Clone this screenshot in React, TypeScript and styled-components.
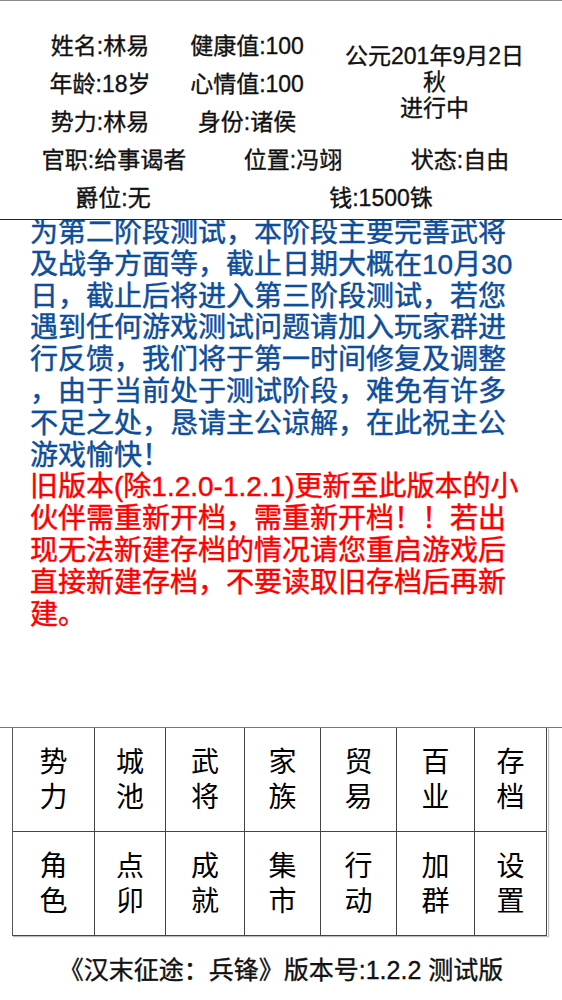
import styled, { createGlobalStyle } from 'styled-components';

const GlobalStyle = createGlobalStyle`
  html, body {
    margin: 0;
    padding: 0;
    background: #ffffff;
  }
  body {
    font-family: "Liberation Sans", "Noto Sans CJK SC", sans-serif;
    color: #111;
  }
`;

const Page = styled.div`
  width: 562px;
  height: 1000px;
  display: flex;
  flex-direction: column;
  overflow: hidden;
`;

const Header = styled.header`
  box-sizing: border-box;
  height: 220px;
  padding-top: 24px;
  border-top: 1px solid #8a8a8a;
  border-bottom: 1px solid #222;
  font-size: 23px;
  -webkit-text-stroke: 0.35px currentColor;
`;

const TopGrid = styled.div`
  display: grid;
  grid-template-columns: 200px 94px 1fr;
  grid-template-rows: repeat(3, 38px);
`;

const InfoRow = styled.div<{ $cols: string }>`
  display: grid;
  grid-template-columns: ${p => p.$cols};
  height: 38px;
`;

const Cell = styled.div`
  display: flex;
  justify-content: center;
  align-items: center;
  white-space: nowrap;
`;

const DateBlock = styled.div`
  grid-column: 3;
  grid-row: 1 / span 3;
  display: flex;
  flex-direction: column;
  justify-content: center;
  align-items: center;
  padding: 0 0 0 13px;
  line-height: 26px;
  white-space: nowrap;
`;

const Notice = styled.section`
  box-sizing: border-box;
  height: 508px;
  overflow: hidden;
  padding: 0 30px;
  border-bottom: 1px solid #777;
  font-size: 28px;
  line-height: 31.8px;
  -webkit-text-stroke: 0.45px currentColor;
  line-break: anywhere;
`;

const Para = styled.p<{ $color: string }>`
  margin: 0;
  color: ${p => p.$color};
  &:first-child {
    margin-top: -3px;
  }
`;

const Menu = styled.nav`
  display: grid;
  grid-template-columns: 82px 71px 79px 76px 76px 78px 72px;
  grid-auto-rows: 104px;
  margin-left: 12px;
  width: 535px;
  border-left: 1px solid #555;
  box-shadow: 1px 1px 1px rgba(0, 0, 0, 0.25);
`;

const MenuButton = styled.button`
  box-sizing: border-box;
  display: flex;
  flex-direction: column;
  justify-content: center;
  align-items: center;
  padding: 0;
  margin: 0;
  background: #fff;
  border: none;
  border-right: 1px solid #444;
  border-bottom: 1px solid #444;
  font-family: "Liberation Sans", "Noto Sans CJK SC", sans-serif;
  font-size: 28px;
  line-height: 35px;
  color: #000;
  cursor: pointer;
`;

const Footer = styled.footer`
  flex: 1;
  display: flex;
  align-items: center;
  justify-content: center;
  font-size: 25px;
  -webkit-text-stroke: 0.35px currentColor;
  padding-bottom: 1px;
`;

const menuItems = [
  '势力', '城池', '武将', '家族', '贸易', '百业', '存档',
  '角色', '点卯', '成就', '集市', '行动', '加群', '设置',
];

export default function App() {
  return (
    <Page>
      <GlobalStyle />
      <Header>
        <TopGrid>
          <Cell>姓名:林易</Cell>
          <Cell>健康值:100</Cell>
          <DateBlock>
            <span>公元201年9月2日</span>
            <span>秋</span>
            <span>进行中</span>
          </DateBlock>
          <Cell>年龄:18岁</Cell>
          <Cell>心情值:100</Cell>
          <Cell>势力:林易</Cell>
          <Cell>身份:诸侯</Cell>
        </TopGrid>
        <InfoRow $cols="228px 130px 1fr">
          <Cell>官职:给事谒者</Cell>
          <Cell>位置:冯翊</Cell>
          <Cell>状态:自由</Cell>
        </InfoRow>
        <InfoRow $cols="226px 310px">
          <Cell>爵位:无</Cell>
          <Cell>钱:1500铢</Cell>
        </InfoRow>
      </Header>
      <Notice>
        <Para $color="#0d4e9b">
          为第二阶段测试，本阶段主要完善武将及战争方面等，截止日期大概在10月30日，截止后将进入第三阶段测试，若您遇到任何游戏测试问题请加入玩家群进行反馈，我们将于第一时间修复及调整，由于当前处于测试阶段，难免有许多不足之处，恳请主公谅解，在此祝主公游戏愉快！
        </Para>
        <Para $color="#ff0000">
          旧版本(除1.2.0-1.2.1)更新至此版本的小伙伴需重新开档，需重新开档！！若出现无法新建存档的情况请您重启游戏后直接新建存档，不要读取旧存档后再新建。
        </Para>
      </Notice>
      <Menu>
        {menuItems.map(item => (
          <MenuButton key={item}>
            <span>{item[0]}</span>
            <span>{item[1]}</span>
          </MenuButton>
        ))}
      </Menu>
      <Footer>《汉末征途：兵锋》版本号:1.2.2 测试版</Footer>
    </Page>
  );
}
